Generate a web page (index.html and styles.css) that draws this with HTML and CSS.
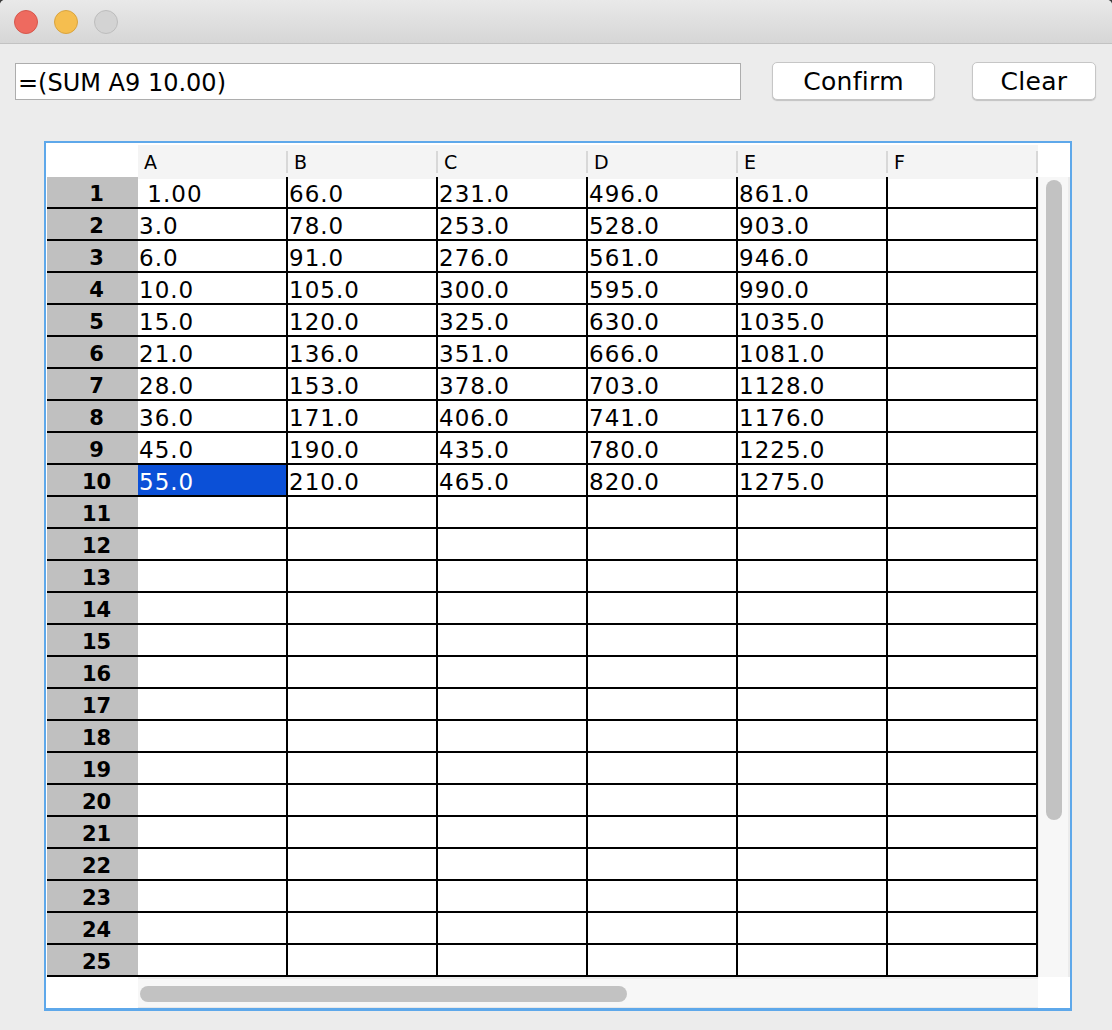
FILE: index.html
```html
<!DOCTYPE html>
<html>
<head>
<meta charset="utf-8">
<title>Spreadsheet</title>
<link rel="stylesheet" href="styles.css">
</head>
<body>
<div class="window">
  <div class="titlebar">
    <span class="light red"></span>
    <span class="light yellow"></span>
    <span class="light grey"></span>
  </div>
  <div class="toolbar">
    <input class="formula" type="text" value="=(SUM A9 10.00)">
    <button class="btn confirm">Confirm</button>
    <button class="btn clear">Clear</button>
  </div>
  <div class="sheet">
    <div class="corner"></div>
    <div class="colheads">
      <div class="colhead">A</div><div class="colhead">B</div><div class="colhead">C</div><div class="colhead">D</div><div class="colhead">E</div><div class="colhead">F</div>
    </div>
    <div class="corner"></div>
    <div class="rowheads">
      <div class="rowhead">1</div><div class="rowhead">2</div><div class="rowhead">3</div><div class="rowhead">4</div><div class="rowhead">5</div>
      <div class="rowhead">6</div><div class="rowhead">7</div><div class="rowhead">8</div><div class="rowhead">9</div><div class="rowhead">10</div>
      <div class="rowhead">11</div><div class="rowhead">12</div><div class="rowhead">13</div><div class="rowhead">14</div><div class="rowhead">15</div>
      <div class="rowhead">16</div><div class="rowhead">17</div><div class="rowhead">18</div><div class="rowhead">19</div><div class="rowhead">20</div>
      <div class="rowhead">21</div><div class="rowhead">22</div><div class="rowhead">23</div><div class="rowhead">24</div><div class="rowhead">25</div>
    </div>
    <div class="cells">
      <div class="c"> 1.00</div><div class="c">66.0</div><div class="c">231.0</div><div class="c">496.0</div><div class="c">861.0</div><div class="c"></div>
      <div class="c">3.0</div><div class="c">78.0</div><div class="c">253.0</div><div class="c">528.0</div><div class="c">903.0</div><div class="c"></div>
      <div class="c">6.0</div><div class="c">91.0</div><div class="c">276.0</div><div class="c">561.0</div><div class="c">946.0</div><div class="c"></div>
      <div class="c">10.0</div><div class="c">105.0</div><div class="c">300.0</div><div class="c">595.0</div><div class="c">990.0</div><div class="c"></div>
      <div class="c">15.0</div><div class="c">120.0</div><div class="c">325.0</div><div class="c">630.0</div><div class="c">1035.0</div><div class="c"></div>
      <div class="c">21.0</div><div class="c">136.0</div><div class="c">351.0</div><div class="c">666.0</div><div class="c">1081.0</div><div class="c"></div>
      <div class="c">28.0</div><div class="c">153.0</div><div class="c">378.0</div><div class="c">703.0</div><div class="c">1128.0</div><div class="c"></div>
      <div class="c">36.0</div><div class="c">171.0</div><div class="c">406.0</div><div class="c">741.0</div><div class="c">1176.0</div><div class="c"></div>
      <div class="c">45.0</div><div class="c">190.0</div><div class="c">435.0</div><div class="c">780.0</div><div class="c">1225.0</div><div class="c"></div>
      <div class="c sel">55.0</div><div class="c">210.0</div><div class="c">465.0</div><div class="c">820.0</div><div class="c">1275.0</div><div class="c"></div>
      <div class="c"></div><div class="c"></div><div class="c"></div><div class="c"></div><div class="c"></div><div class="c"></div>
      <div class="c"></div><div class="c"></div><div class="c"></div><div class="c"></div><div class="c"></div><div class="c"></div>
      <div class="c"></div><div class="c"></div><div class="c"></div><div class="c"></div><div class="c"></div><div class="c"></div>
      <div class="c"></div><div class="c"></div><div class="c"></div><div class="c"></div><div class="c"></div><div class="c"></div>
      <div class="c"></div><div class="c"></div><div class="c"></div><div class="c"></div><div class="c"></div><div class="c"></div>
      <div class="c"></div><div class="c"></div><div class="c"></div><div class="c"></div><div class="c"></div><div class="c"></div>
      <div class="c"></div><div class="c"></div><div class="c"></div><div class="c"></div><div class="c"></div><div class="c"></div>
      <div class="c"></div><div class="c"></div><div class="c"></div><div class="c"></div><div class="c"></div><div class="c"></div>
      <div class="c"></div><div class="c"></div><div class="c"></div><div class="c"></div><div class="c"></div><div class="c"></div>
      <div class="c"></div><div class="c"></div><div class="c"></div><div class="c"></div><div class="c"></div><div class="c"></div>
      <div class="c"></div><div class="c"></div><div class="c"></div><div class="c"></div><div class="c"></div><div class="c"></div>
      <div class="c"></div><div class="c"></div><div class="c"></div><div class="c"></div><div class="c"></div><div class="c"></div>
      <div class="c"></div><div class="c"></div><div class="c"></div><div class="c"></div><div class="c"></div><div class="c"></div>
      <div class="c"></div><div class="c"></div><div class="c"></div><div class="c"></div><div class="c"></div><div class="c"></div>
      <div class="c"></div><div class="c"></div><div class="c"></div><div class="c"></div><div class="c"></div><div class="c"></div>
    </div>
    <div class="vscroll"><div class="vthumb"></div></div>
    <div class="corner"></div>
    <div class="hscroll"><div class="hthumb"></div></div>
    <div class="corner"></div>
  </div>
</div>
</body>
</html>
```
FILE: styles.css
```css
html, body {
  margin: 0;
  padding: 0;
}
body {
  background: #3a3a3a;
}
.window {
  width: 1112px;
  height: 1030px;
  background: #ececec;
  border-radius: 5px 5px 0 0;
  overflow: hidden;
  display: flex;
  flex-direction: column;
  font-family: "DejaVu Sans", sans-serif;
  color: #000;
}
.titlebar {
  height: 43px;
  flex: none;
  border-bottom: 1px solid #c2c2c2;
  background: linear-gradient(#e9e9e9, #d6d6d6);
  display: flex;
  align-items: center;
  gap: 16px;
  padding-left: 14px;
}
.light {
  width: 24px;
  height: 24px;
  border-radius: 50%;
  box-sizing: border-box;
  border: 1px solid;
}
.red { background: #ee6a5f; border-color: #d6574c; }
.yellow { background: #f5be4f; border-color: #d9a43f; }
.grey { background: #d3d3d3; border-color: #bdbdbd; }

.toolbar {
  display: flex;
  align-items: flex-start;
  padding: 18px 16px 0 15px;
  flex: none;
}
.formula {
  width: 726px;
  height: 37px;
  margin: 1px 0 0 0;
  box-sizing: border-box;
  border: 1px solid #adadad;
  padding: 3px 2px 0 2px;
  font-family: "DejaVu Sans", sans-serif;
  font-size: 24px;
  color: #000;
  background: #fff;
  outline: none;
}
.btn {
  height: 38px;
  box-sizing: border-box;
  background: #fff;
  border: 1px solid #c6c6c6;
  border-radius: 5px;
  box-shadow: 0 1px 1px rgba(0, 0, 0, 0.18);
  font-family: "DejaVu Sans", sans-serif;
  font-size: 25px;
  letter-spacing: 0.3px;
  color: #000;
  padding: 0;
}
.confirm {
  width: 163px;
  margin-left: 31px;
}
.clear {
  width: 124px;
  margin-left: 37px;
}

.sheet {
  align-self: flex-start;
  margin: 41px 0 0 44px;
  border: 2px solid #5ea8ea;
  border-bottom-width: 3px;
  background: #fff;
  padding: 2px 0 0 1px;
  display: grid;
  grid-template-columns: 91px 900px 32px;
  grid-template-rows: 32px 800px 31px;
}
.corner {
  background: #fff;
}
.colheads {
  display: grid;
  grid-template-columns: repeat(6, 150px);
}
.colhead {
  background: linear-gradient(#d8d8d8, #d8d8d8) right center / 2px 22px no-repeat #f4f4f4;
  font-size: 19px;
  line-height: 34px;
  padding-left: 6px;
}
.rowheads {
  display: grid;
  grid-auto-rows: 32px;
}
.rowhead {
  box-sizing: border-box;
  background: #c0c0c0;
  border-bottom: 2px solid #000;
  font-weight: bold;
  font-size: 21px;
  line-height: 35px;
  text-align: center;
  padding-left: 8px;
}
.cells {
  display: grid;
  grid-template-columns: repeat(6, 150px);
  grid-auto-rows: 32px;
}
.c {
  box-sizing: border-box;
  border-right: 2px solid #000;
  border-bottom: 2px solid #000;
  font-size: 23px;
  letter-spacing: 1px;
  line-height: 34px;
  padding-left: 1px;
  white-space: pre;
  color: #000;
}
.c.sel {
  background: #0b50d7;
  color: #fff;
}
.vscroll {
  box-sizing: border-box;
  background: #f7f7f7;
  border-left: 1px solid #e6e6e6;
  border-right: 2px solid #ececec;
  padding: 3px 0 0 7px;
}
.vthumb {
  width: 16px;
  height: 640px;
  border-radius: 8px;
  background: #c2c2c2;
}
.hscroll {
  box-sizing: border-box;
  background: #f7f7f7;
  border-top: 2px solid #ececec;
  border-bottom: 1px solid #e8e8e8;
  padding: 7px 0 0 2px;
}
.hthumb {
  width: 487px;
  height: 16px;
  border-radius: 8px;
  background: #c2c2c2;
}
```
